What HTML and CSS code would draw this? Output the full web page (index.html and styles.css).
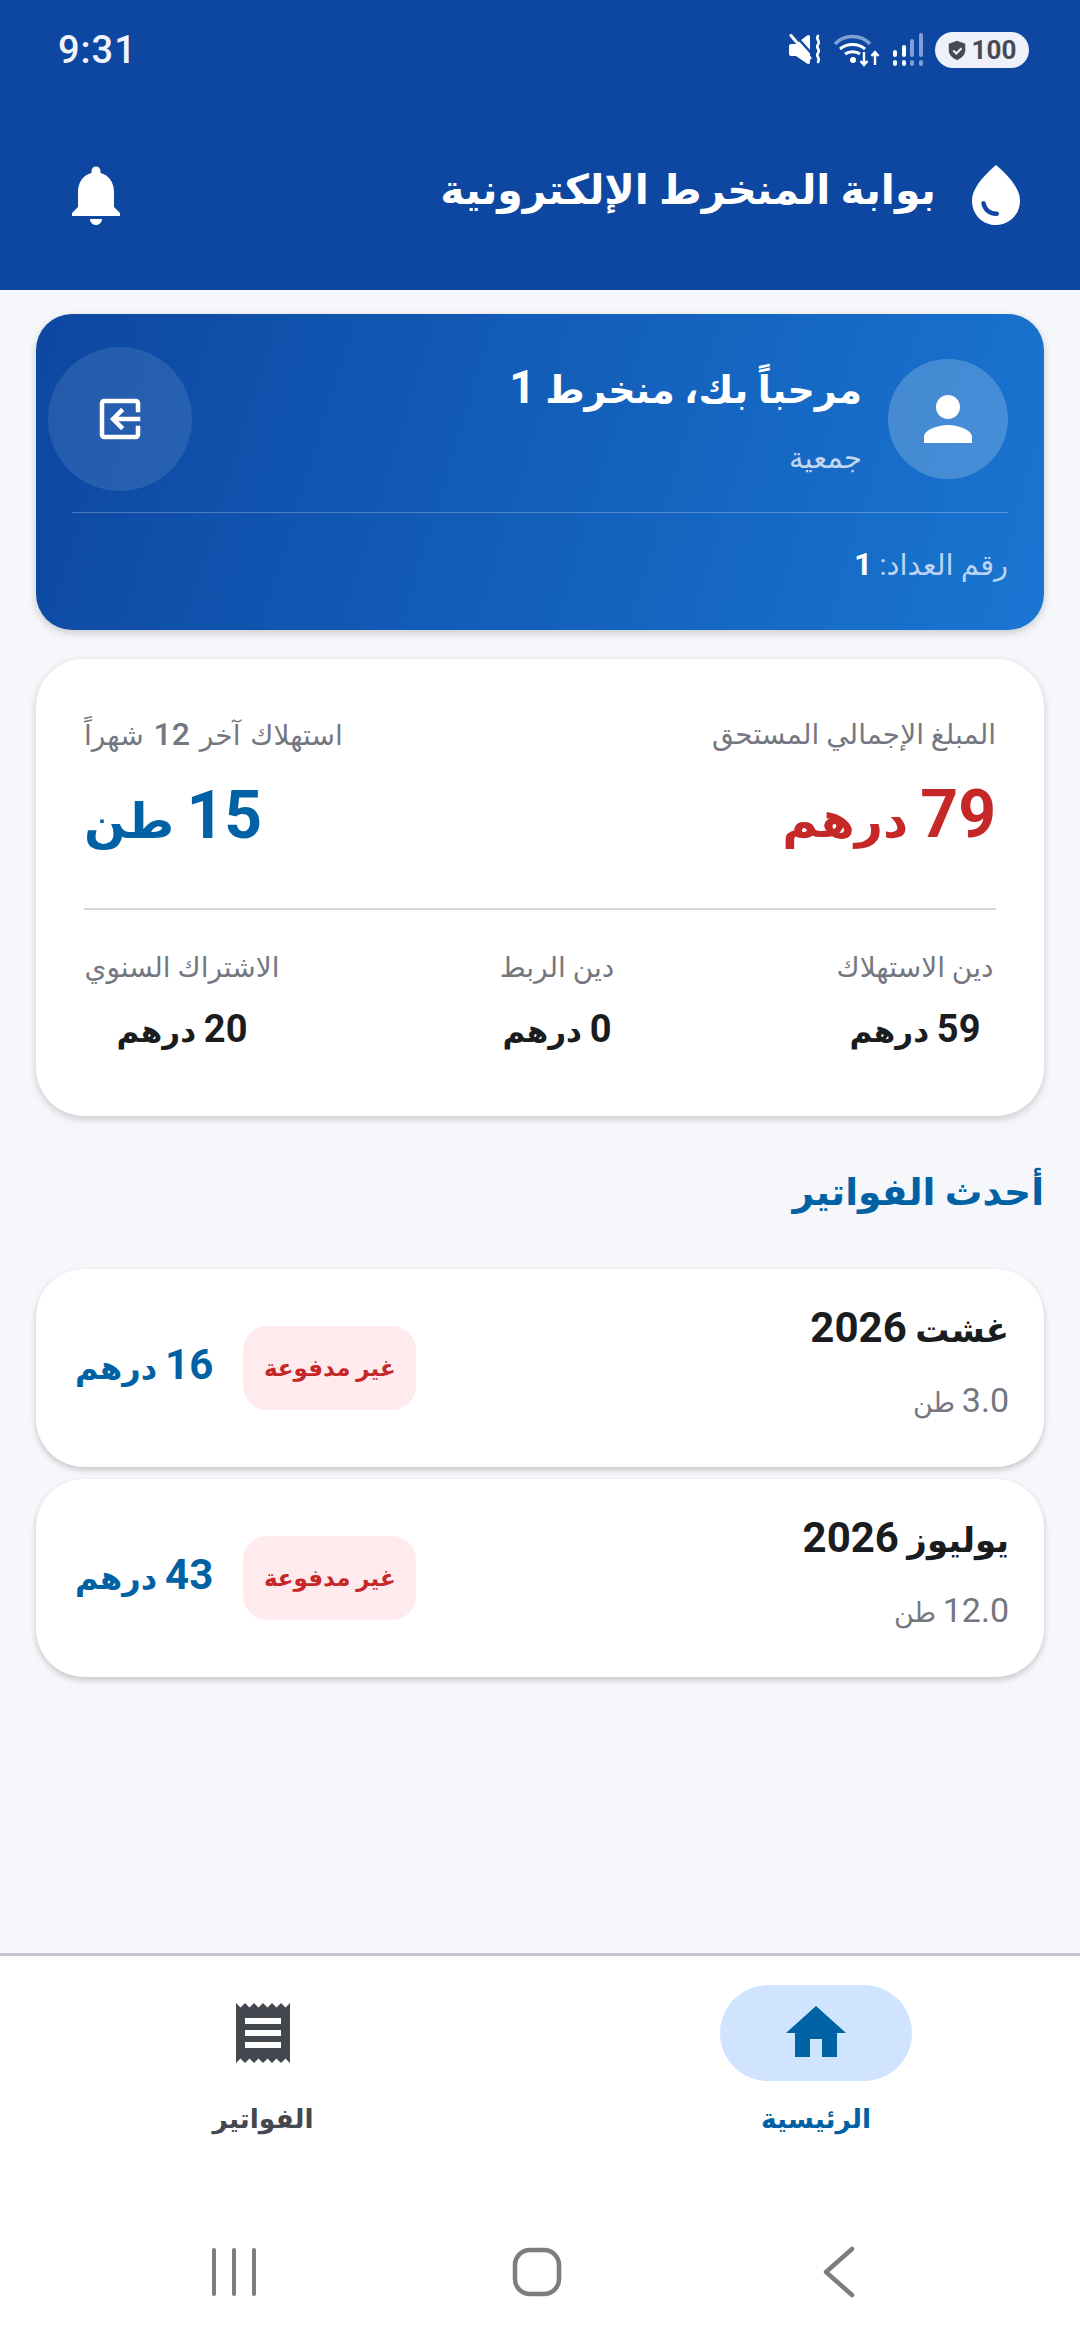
FILE: index.html
```html
<!DOCTYPE html>
<html lang="ar" dir="rtl">

<head>
  <meta charset="UTF-8">
  <meta name="viewport" content="width=device-width, initial-scale=1.0">
  <title>بوابة المنخرط الإلكترونية</title>
  <link rel="stylesheet" href="styles.css">
</head>

<body>
  <header class="app-header">
    <div class="status-bar" dir="ltr">
      <span class="status-time">9:31</span>
      <div class="status-icons">
        <svg viewBox="0 0 34 32" width="34" height="32">
          <path d="M1 12q0-2 2-2h5L19 1.500q3-1.500 3 1.500v25q0 3-3 1.500L8 22H3q-2 0-2-2z" fill="#fff" />
          <path d="M6 0l19 21" fill="none" stroke="#0d47a1" stroke-width="2.400" />
          <path d="M3 1.500l19 22.500" fill="none" stroke="#fff" stroke-width="3" stroke-linecap="round" />
          <path d="M30 2c-3 3 3 5 0 8.500s3 5 0 8.500 3 5 0 9" fill="none" stroke="#fff" stroke-width="2.600" stroke-linecap="round" />
        </svg>
        <svg viewBox="0 0 47 34" width="47" height="34">
          <path d="M1 11C10 1 27 1 36 11" fill="none" stroke="#7f9fd6" stroke-width="3.400" />
          <path d="M6 16c7-6 18-6 25 0M11 21c4-3 11-3 15 0" fill="none" stroke="#fff" stroke-width="3" />
          <circle cx="19" cy="27" r="3" fill="#fff" />
          <path d="M30 19v13m-3.500-4 3.500 4 3.500-4M41 32V19m-3.500 4 3.500-4 3.500 4" fill="none" stroke="#fff" stroke-width="2.400" />
        </svg>
        <svg viewBox="0 0 30 34" width="30" height="34">
          <g fill="#fff">
            <rect x="0" y="17" width="4" height="7" rx="2" />
            <rect x="0" y="27" width="4" height="6" rx="2" />
            <rect x="9" y="12" width="4" height="12" rx="2" />
            <rect x="9" y="27" width="4" height="6" rx="2" />
          </g>
          <g fill="#7f9fd6">
            <rect x="17" y="6" width="4" height="18" rx="2" />
            <rect x="17" y="27" width="4" height="6" rx="2" />
            <rect x="26" y="0" width="4" height="24" rx="2" />
            <rect x="26" y="27" width="4" height="6" rx="2" />
          </g>
        </svg>
        <div class="battery">
          <svg viewBox="0 0 24 28" width="18" height="21">
            <path d="M12 1l11 4v9c0 6-5 10-11 13C6 24 1 20 1 14V5z" fill="#474a56" />
            <path d="M7 14l4 4 7-7" fill="none" stroke="#eef1fa" stroke-width="2.600" />
          </svg>
          <span>100</span>
        </div>
      </div>
    </div>
    <div class="app-bar">
      <div class="app-title">
        <svg viewBox="0 0 24 24" width="72" height="72"><path fill="#fff" d="M12 2c-5.330 4.550-8 8.480-8 11.800 0 4.980 3.800 8.200 8 8.200s8-3.220 8-8.200c0-3.320-2.670-7.250-8-11.800zM7.830 14c.37 0 .67.26.74.62.41 2.220 2.280 2.980 3.640 2.870.43-.02.79.32.79.75 0 .4-.32.73-.72.75-2.130.13-4.620-1.090-5.190-4.120-.08-.45.28-.87.74-.87z" /></svg>
        <h1>بوابة المنخرط الإلكترونية</h1>
      </div>
      <svg viewBox="0 0 24 24" width="72" height="72"><path fill="#fff" d="M12 22c1.100 0 2-.9 2-2h-4c0 1.100.9 2 2 2zm6-6v-5c0-3.070-1.640-5.640-4.500-6.320V4c0-.83-.67-1.500-1.500-1.500s-1.500.67-1.500 1.500v.68C7.630 5.360 6 7.920 6 11v5l-2 2v1h16v-1l-2-2z" /></svg>
    </div>
  </header>

  <main class="content">
    <section class="welcome-card">
      <div class="welcome-top">
        <div class="avatar">
          <svg viewBox="0 0 24 24" width="72" height="72"><path fill="#fff" d="M12 12c2.210 0 4-1.790 4-4s-1.790-4-4-4-4 1.790-4 4 1.790 4 4 4zm0 2c-2.670 0-8 1.340-8 4v2h16v-2c0-2.660-5.330-4-8-4z" /></svg>
        </div>
        <div class="welcome-text">
          <div class="welcome-name">مرحباً بك، منخرط <span class="num">1</span></div>
          <div class="welcome-type">جمعية</div>
        </div>
        <button class="logout-btn">
          <svg viewBox="0 0 24 24" width="54" height="54"><path fill="#fff" transform="matrix(-1 0 0 1 24 0)" d="M10.090 15.590L11.500 17l5-5-5-5-1.410 1.410L12.670 11H3v2h9.670l-2.580 2.590zM19 3H5c-1.110 0-2 .9-2 2v4h2V5h14v14H5v-4H3v4c0 1.100.89 2 2 2h14c1.100 0 2-.9 2-2V5c0-1.100-.9-2-2-2z" /></svg>
        </button>
      </div>
      <div class="welcome-meter">رقم العداد: <span class="num">1</span></div>
    </section>

    <section class="summary-card">
      <div class="summary-top">
        <div class="summary-col">
          <div class="label">المبلغ الإجمالي المستحق</div>
          <div class="big-value red"><span class="num">79</span> درهم</div>
        </div>
        <div class="summary-col usage">
          <div class="label">استهلاك آخر <span class="num">12</span> شهراً</div>
          <div class="big-value blue"><span class="num">15</span> طن</div>
        </div>
      </div>
      <div class="summary-bottom">
        <div class="debt">
          <div class="label">دين الاستهلاك</div>
          <div class="small-value"><span class="num">59</span> درهم</div>
        </div>
        <div class="debt">
          <div class="label">دين الربط</div>
          <div class="small-value"><span class="num">0</span> درهم</div>
        </div>
        <div class="debt">
          <div class="label">الاشتراك السنوي</div>
          <div class="small-value"><span class="num">20</span> درهم</div>
        </div>
      </div>
    </section>

    <h2 class="section-title">أحدث الفواتير</h2>

    <div class="invoice-list">
      <article class="invoice">
        <div class="invoice-info">
          <div class="invoice-month">غشت <span class="num">2026</span></div>
          <div class="invoice-tons"><span class="num">3.0</span> طن</div>
        </div>
        <span class="badge">غير مدفوعة</span>
        <span class="invoice-amount"><span class="num">16</span> درهم</span>
      </article>
      <article class="invoice">
        <div class="invoice-info">
          <div class="invoice-month">يوليوز <span class="num">2026</span></div>
          <div class="invoice-tons"><span class="num">12.0</span> طن</div>
        </div>
        <span class="badge">غير مدفوعة</span>
        <span class="invoice-amount"><span class="num">43</span> درهم</span>
      </article>
    </div>
  </main>

  <nav class="bottom-nav">
    <a class="nav-item active">
      <span class="nav-pill">
        <svg viewBox="0 0 24 24" width="72" height="72"><path fill="#0061a4" d="M10 20v-6h4v6h5v-8h3L12 3 2 12h3v8z" /></svg>
      </span>
      <span class="nav-label">الرئيسية</span>
    </a>
    <a class="nav-item">
      <span class="nav-pill">
        <svg viewBox="0 0 24 24" width="72" height="72"><path fill="#43474e" d="M18 17H6v-2h12v2zm0-4H6v-2h12v2zm0-4H6V7h12v2zM3 22l1.500-1.500L6 22l1.500-1.500L9 22l1.500-1.500L12 22l1.500-1.500L15 22l1.500-1.500L18 22l1.500-1.500L21 22V2l-1.500 1.500L18 2l-1.500 1.500L15 2l-1.500 1.500L12 2l-1.500 1.500L9 2 7.500 3.500 6 2 4.500 3.500 3 2v20z" /></svg>
      </span>
      <span class="nav-label">الفواتير</span>
    </a>
  </nav>

  <div class="system-nav" dir="ltr">
    <svg viewBox="0 0 46 48" width="46" height="48"><path d="M3 2v44M23 2v44M43 2v44" fill="none" stroke="#7d7d7d" stroke-width="4" stroke-linecap="round" /></svg>
    <svg viewBox="0 0 50 50" width="50" height="50"><rect x="3" y="3" width="44" height="44" rx="15" fill="none" stroke="#7d7d7d" stroke-width="4.500" /></svg>
    <svg viewBox="0 0 34 52" width="34" height="52"><path d="M30 3L4 26l26 23" fill="none" stroke="#7d7d7d" stroke-width="4.500" stroke-linecap="round" stroke-linejoin="round" /></svg>
  </div>
</body>

</html>
```

FILE: styles.css
```css
* {
  box-sizing: border-box;
}

html,
body {
  margin: 0;
  padding: 0;
}

body {
  width: 1080px;
  height: 2340px;
  display: flex;
  flex-direction: column;
  background: #f5f7fa;
  font-family: Roboto, "Noto Sans", "DejaVu Sans", sans-serif;
  color: #1a1c1e;
  overflow: hidden;
}

/* top bars */
.app-header {
  height: 290px;
  background: #0d47a1;
  color: #fff;
}

.status-bar {
  height: 100px;
  padding: 0 51px 0 58px;
  display: flex;
  align-items: center;
  justify-content: space-between;
}

.status-time {
  font-size: 38px;
  font-weight: 500;
  letter-spacing: 1px;
  color: #f2f4fa;
}

.status-icons {
  display: flex;
  align-items: center;
  gap: 12px;
}

.battery {
  height: 36px;
  width: 94px;
  border-radius: 18px;
  background: #eef1fa;
  color: #474a56;
  font-size: 26px;
  font-weight: 700;
  display: flex;
  align-items: center;
  justify-content: center;
  gap: 6px;
}

.app-bar {
  height: 190px;
  padding: 0 48px 0 60px;
  display: flex;
  align-items: center;
  justify-content: space-between;
}

.app-title {
  display: flex;
  align-items: center;
  gap: 24px;
}

.app-title h1 {
  margin: 0 0 10px;
  font-size: 41px;
  font-weight: 700;
}

/* main */
.content {
  flex: 1;
  padding: 24px 36px 0;
}

.num {
  font-family: Roboto, sans-serif;
}

.welcome-card {
  height: 316px;
  padding: 0 36px 0 12px;
  border-radius: 36px;
  background: linear-gradient(107deg, #0d47a1, #1976d2);
  color: #fff;
  box-shadow: 0 3px 8px rgba(0, 0, 0, 0.18);
}

.welcome-top {
  height: 198px;
  padding-top: 12px;
  display: flex;
  align-items: center;
  gap: 26px;
}

.avatar {
  width: 120px;
  height: 120px;
  border-radius: 50%;
  background: rgba(255, 255, 255, 0.2);
  display: flex;
  align-items: center;
  justify-content: center;
}

.welcome-text {
  flex: 1;
  padding-bottom: 3px;
}

.welcome-name {
  font-size: 38px;
  font-weight: 700;
}

.welcome-name .num {
  font-size: 46px;
}

.welcome-type {
  margin-top: 27px;
  font-size: 29px;
  color: #c6d8f0;
}

.logout-btn {
  width: 144px;
  height: 144px;
  padding: 0;
  border: 0;
  border-radius: 50%;
  background: rgba(255, 255, 255, 0.1);
  display: flex;
  align-items: center;
  justify-content: center;
}

.welcome-meter {
  margin: 0 0 0 24px;
  padding-top: 32px;
  border-top: 1px solid rgba(255, 255, 255, 0.25);
  font-size: 29px;
  color: #bcd4f2;
}

.welcome-meter .num {
  font-size: 32px;
  font-weight: 700;
  color: #fff;
}

.summary-card {
  height: 457px;
  margin-top: 29px;
  padding: 56px 48px 0;
  border-radius: 48px;
  background: #fff;
  box-shadow: 0 3px 8px rgba(0, 0, 0, 0.18);
}

.summary-top {
  height: 195px;
  display: flex;
  justify-content: space-between;
  border-bottom: 2px solid #d5d7dc;
}

.summary-col {
  display: flex;
  flex-direction: column;
}

.summary-col.usage {
  align-items: flex-end;
}

.usage .label {
  word-spacing: 3px;
}

.label {
  font-size: 28px;
  line-height: 39px;
  white-space: nowrap;
  color: #74777f;
}

.label .num {
  font-size: 32px;
  font-weight: 500;
}

.big-value {
  margin-top: 22px;
  font-size: 49px;
  font-weight: 700;
}

.big-value .num {
  font-size: 66px;
}

.red {
  color: #c62828;
}

.blue {
  color: #0061a4;
}

.summary-bottom {
  display: grid;
  grid-template-columns: 162px 1fr 196px;
  padding-top: 38px;
  text-align: center;
}

.small-value {
  margin-top: 20px;
  font-size: 31px;
  font-weight: 700;
}

.small-value .num {
  font-size: 38px;
}

.section-title {
  margin: 54px 0 0;
  font-size: 37.500px;
  font-weight: 700;
  color: #0061a4;
}

.invoice-list {
  margin-top: 55px;
  display: flex;
  flex-direction: column;
  gap: 12px;
}

.invoice {
  height: 198px;
  padding: 0 35px 0 39px;
  border-radius: 48px;
  background: #fff;
  box-shadow: 0 3px 6px rgba(0, 0, 0, 0.2);
  display: flex;
  align-items: center;
  gap: 30px;
}

.invoice-info {
  flex: 1;
  padding-bottom: 14px;
}

.invoice-month {
  font-size: 34px;
  font-weight: 700;
}

.invoice-month .num {
  font-size: 42px;
}

.invoice-tons {
  margin-top: 28px;
  font-size: 27px;
  color: #74777f;
}

.invoice-tons .num {
  font-size: 34px;
}

.badge {
  width: 173px;
  height: 84px;
  border-radius: 24px;
  background: #ffebee;
  color: #c62828;
  font-size: 23px;
  font-weight: 700;
  display: flex;
  align-items: center;
  justify-content: center;
}

.invoice-amount {
  margin-bottom: 8px;
  font-size: 32px;
  font-weight: 700;
  color: #0061a4;
}

.invoice-amount .num {
  font-size: 42px;
}

/* bottom */
.bottom-nav {
  height: 212px;
  padding: 29px 168px 0 167px;
  border-top: 3px solid #c2c6d0;
  background: #fff;
  display: grid;
  grid-template-columns: 192px 192px;
  justify-content: space-between;
}

.nav-item {
  display: flex;
  flex-direction: column;
  align-items: center;
  gap: 22px;
}

.nav-pill {
  width: 192px;
  height: 96px;
  border-radius: 48px;
  display: flex;
  align-items: center;
  justify-content: center;
}

.nav-item.active .nav-pill {
  background: #d1e4ff;
}

.nav-label {
  font-size: 26.500px;
  font-weight: 700;
  color: #43474e;
}

.nav-item.active .nav-label {
  color: #0061a4;
}

.system-nav {
  height: 175px;
  padding: 39px 0 0 83px;
  background: #fff;
  display: grid;
  grid-template-columns: repeat(3, 302.500px);
  justify-items: center;
  align-items: center;
}
```
